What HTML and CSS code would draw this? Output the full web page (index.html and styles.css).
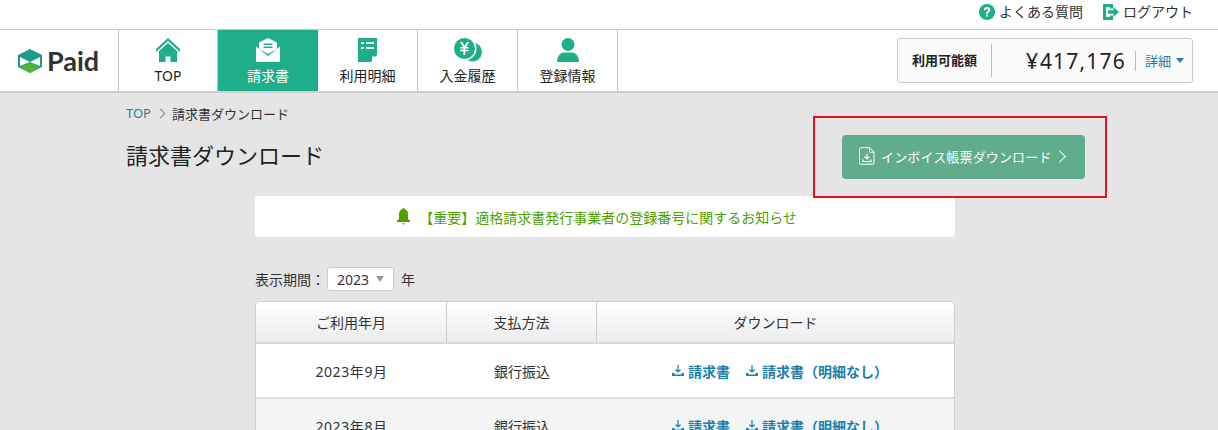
FILE: index.html
```html
<!DOCTYPE html>
<html lang="ja">
<head>
<meta charset="utf-8">
<title>請求書ダウンロード</title>
<link rel="stylesheet" href="styles.css">
</head>
<body>
<div class="topbar">
  <a class="toplink"><svg class="ic-help" viewBox="0 0 16 16"><circle cx="8" cy="8" r="8" fill="#1eae8a"/><path d="M4.800 6.200C4.900 4.200 6.300 3 8.100 3c1.900 0 3.200 1.100 3.200 2.700 0 2.300-2.400 2.300-2.400 4.100H7C7 7.400 9.200 7.400 9.200 5.900c0-.6-.4-1-1.100-1-.8 0-1.200.5-1.300 1.300z" fill="#fff"/><rect x="7" y="10.600" width="1.900" height="2" fill="#fff"/></svg>よくある質問</a>
  <a class="toplink"><svg class="ic-logout" viewBox="0 0 16 16"><path d="M0 0h10v4.500H7V3H3v10h4v-1.500h3V16H0z" fill="#1eae8a"/><path d="M5 6.200h5.500V3.200L16 8l-5.500 4.800v-3H5z" fill="#1eae8a"/></svg>ログアウト</a>
</div>
<header class="nav">
  <div class="logo">
    <svg class="logo-mark" viewBox="0 0 24 24"><path d="M12 0l12 6v12l-12 6L0 18V6z" fill="#1c9c86"/><path d="M2 8l10 5 10-5v9l-10-4-10 4z" fill="#fff"/><path d="M12 13.500l9.500 4.500L12 24 2.500 18z" fill="#55b332"/></svg>
    <span class="logo-text">Paid</span>
  </div>
  <a class="nav-item first">
    <svg class="nav-ic" viewBox="0 0 26 24"><path d="M13 0L25 11v3L13 3 1 14v-3z" fill="#1eae8a"/><path d="M13 5l9 8v11h-6.500v-5.500h-5V24H4V13z" fill="#1eae8a"/></svg>
    <span>TOP</span>
  </a>
  <a class="nav-item active">
    <svg class="nav-ic" viewBox="0 0 24 24"><path d="M12 0l9 4.500V11l-9 5-9-5V4.500z" fill="#fff"/><rect x="7.500" y="5.500" width="9" height="1.500" fill="#1eae8a"/><rect x="7.500" y="8.500" width="9" height="1.500" fill="#1eae8a"/><path d="M0 8.500L12 18 24 8.500V24H0z" fill="#fff"/></svg>
    <span>請求書</span>
  </a>
  <a class="nav-item">
    <svg class="nav-ic" viewBox="0 0 20 24"><path d="M0 0h19v17l-6 7H0z" fill="#1eae8a"/><path d="M14 18.500h4.500L14 23.500z" fill="#fff"/><rect x="3" y="4" width="3" height="2" fill="#fff"/><rect x="8" y="4" width="8" height="2" fill="#fff"/><rect x="3" y="9" width="3" height="2" fill="#fff"/><rect x="8" y="9" width="8" height="2" fill="#fff"/></svg>
    <span>利用明細</span>
  </a>
  <a class="nav-item">
    <svg class="nav-ic ic-wide" viewBox="0 0 28 24"><circle cx="18.500" cy="14" r="9.500" fill="#1eae8a"/><circle cx="10.500" cy="10.500" r="12" fill="#fff"/><circle cx="10.500" cy="10.500" r="10.500" fill="#1eae8a"/><path d="M6 4h2.300l2.300 4 2.300-4h2.300l-3 5h2.300v1.500h-3.300v1.200h3.300v1.500h-3.300V17H9.500v-3.800H6.200v-1.500h3.300v-1.200H6.200V9h2.800z" fill="#fff"/></svg>
    <span>入金履歴</span>
  </a>
  <a class="nav-item">
    <svg class="nav-ic" viewBox="0 0 22 24"><circle cx="11" cy="6.500" r="6.500" fill="#1eae8a"/><path d="M0 24c0-6 3.500-9.500 7-9.500h8c3.500 0 7 3.500 7 9.500z" fill="#1eae8a"/></svg>
    <span>登録情報</span>
  </a>
  <div class="balance">
    <div class="balance-label">利用可能額</div>
    <div class="balance-value">¥<span class="amount">417,176</span></div>
    <a class="balance-detail">詳細<i class="tri"></i></a>
  </div>
</header>

<main class="main">
  <nav class="crumbs"><a>TOP</a><i class="chev"></i><span>請求書ダウンロード</span></nav>
  <div class="title-row">
    <h1>請求書ダウンロード</h1>
    <a class="invoice-btn">
      <svg class="ic-file" viewBox="0 0 16 18"><path d="M1.500.7h9l4.500 4.500v11a1 1 0 0 1-1 1H1.500a1 1 0 0 1-1-1V1.700a1 1 0 0 1 1-1z" fill="none" stroke="#fff"/><path d="M10.500.7v4.500H15" fill="none" stroke="#fff"/><path d="M8 6.500v5.500M5.500 9.500L8 12l2.500-2.500M4 12.500v2h8v-2" fill="none" stroke="#fff" stroke-width="1.200"/></svg>
      <span class="btn-label">インボイス帳票ダウンロード</span>
      <i class="btn-chev"></i>
    </a>
    <div class="annotation"></div>
  </div>
  <div class="content">
    <a class="notice">
      <svg class="ic-bell" viewBox="0 0 15 17"><path d="M7.500 0c.7 0 1 .5 1 1 2.300.6 3.500 2.500 3.500 5v5l2 1.500V14H1v-1.500L3 11V6c0-2.500 1.200-4.400 3.500-5 0-.5.300-1 1-1z" fill="#4ea100"/><path d="M6 15.300h3L7.500 17z" fill="#4ea100"/></svg>
      <span>【重要】適格請求書発行事業者の登録番号に関するお知らせ</span>
    </a>
    <div class="filter">
      <span>表示期間：</span>
      <div class="select">2023<i class="sel-tri"></i></div>
      <span>年</span>
    </div>
    <div class="table">
      <div class="tr th">
        <div class="c1">ご利用年月</div><div class="c2">支払方法</div><div class="c3">ダウンロード</div>
      </div>
      <div class="tr">
        <div class="c1 date">2023年9月</div><div class="c2">銀行振込</div>
        <div class="c3 dl">
          <a><svg class="ic-dl" viewBox="0 0 12 11"><path d="M6 0v6.500M3.500 4.500L6 7l2.500-2.500" fill="none" stroke="#1a80ad" stroke-width="1.200"/><path d="M0 8h2.500v1.500h7V8H12v3H0z" fill="#1a80ad"/></svg>請求書</a>
          <a><svg class="ic-dl" viewBox="0 0 12 11"><path d="M6 0v6.500M3.500 4.500L6 7l2.500-2.500" fill="none" stroke="#1a80ad" stroke-width="1.200"/><path d="M0 8h2.500v1.500h7V8H12v3H0z" fill="#1a80ad"/></svg>請求書（明細なし）</a>
        </div>
      </div>
      <div class="tr alt">
        <div class="c1 date">2023年8月</div><div class="c2">銀行振込</div>
        <div class="c3 dl">
          <a><svg class="ic-dl" viewBox="0 0 12 11"><path d="M6 0v6.500M3.500 4.500L6 7l2.500-2.500" fill="none" stroke="#1a80ad" stroke-width="1.200"/><path d="M0 8h2.500v1.500h7V8H12v3H0z" fill="#1a80ad"/></svg>請求書</a>
          <a><svg class="ic-dl" viewBox="0 0 12 11"><path d="M6 0v6.500M3.500 4.500L6 7l2.500-2.500" fill="none" stroke="#1a80ad" stroke-width="1.200"/><path d="M0 8h2.500v1.500h7V8H12v3H0z" fill="#1a80ad"/></svg>請求書（明細なし）</a>
        </div>
      </div>
    </div>
  </div>
</main>
</body>
</html>
```
FILE: styles.css
```css
* { box-sizing: border-box; }
html, body { margin: 0; padding: 0; height: 430px; overflow: hidden; }
body {
  background: #e5e5e5;
  color: #222;
  font-family: "Noto Sans", "Noto Sans CJK JP", sans-serif;
  font-size: 14px;
}
a { color: inherit; text-decoration: none; }
svg { display: block; flex: none; }

.topbar {
  height: 30px;
  background: #fff;
  border-bottom: 1px solid #c8c8c8;
  display: flex;
  justify-content: flex-end;
  align-items: center;
  gap: 20px;
  padding: 0 25px 6px 0;
}
.toplink { display: flex; align-items: center; gap: 4px; font-size: 14px; color: #333; line-height: 20px; }
.ic-help { width: 16px; height: 16px; }
.ic-logout { width: 16px; height: 16px; }

.nav {
  height: 63px;
  background: #fff;
  border-bottom: 2px solid #cfcfcf;
  display: flex;
}
.logo {
  width: 119px;
  border-right: 1px solid #c8c8c8;
  display: flex;
  align-items: center;
  padding: 0 0 0 18px;
  gap: 5px;
}
.logo-mark { width: 24px; height: 24px; }
.logo-text { font-family: Lato, sans-serif; font-weight: 700; font-size: 27px; color: #333; line-height: 1; }
.nav-item {
  width: 100px;
  border-right: 1px solid #c8c8c8;
  display: flex;
  flex-direction: column;
  align-items: center;
  padding-top: 8px;
  color: #222;
  font-size: 14px;
}
.nav-item.first { width: 99px; }
.nav-item span { line-height: 20px; margin-top: 4px; }
.nav-item.active { background: #1eae8a; color: #fff; border-right: 0; }
.nav-ic { height: 24px; width: 26px; }
.ic-wide { width: 28px; }

.balance {
  margin: 8px 25px 0 auto;
  width: 296px;
  height: 45px;
  border: 1px solid #c8c8c8;
  border-radius: 3px;
  background: #fbfbfb;
  display: flex;
  align-items: center;
}
.balance-label {
  width: 94px;
  height: 33px;
  border-right: 1px solid #bbb;
  font-weight: 700;
  font-size: 13px;
  line-height: 33px;
  text-align: center;
}
.balance-value {
  width: 143px;
  padding-right: 9px;
  font-size: 21px;
  color: #222;
  line-height: 28px;
  display: flex;
  justify-content: flex-end;
  gap: 2px;
}
.amount { letter-spacing: 1.2px; }
.balance-detail {
  height: 20px;
  border-left: 1px solid #bbb;
  padding-left: 9px;
  color: #1a80ad;
  font-size: 13px;
  line-height: 20px;
  display: flex;
  align-items: center;
  gap: 5px;
}
.tri { width: 0; height: 0; border: 4px solid transparent; border-top: 5px solid #1a80ad; border-bottom: 0; }

.main { width: 966px; margin-left: 126px; }
.crumbs { display: flex; align-items: center; height: 20px; margin-top: 10px; font-size: 13px; color: #333; }
.crumbs a { color: #1a80ad; }
.chev { width: 7px; height: 7px; border-top: 1px solid #888; border-right: 1px solid #888; transform: rotate(45deg); margin: 0 8px 0 6px; }

.title-row {
  position: relative;
  height: 44px;
  margin-top: 12px;
  padding-right: 7px;
  display: flex;
  justify-content: space-between;
  align-items: flex-start;
}
h1 { margin: 4px 0 0; font-size: 22px; font-weight: 400; line-height: 32px; color: #222; }
.invoice-btn {
  width: 243px;
  height: 44px;
  background: #60ac8d;
  border-radius: 4px;
  color: #fff;
  font-size: 13px;
  display: flex;
  align-items: center;
  padding: 0 0 2px 17px;
  gap: 6px;
}
.btn-label { letter-spacing: .15px; }
.ic-file { width: 16px; height: 18px; }
.btn-chev { width: 9px; height: 9px; border-top: 1px solid #fff; border-right: 1px solid #fff; transform: rotate(45deg); margin-left: -3px; }
.annotation {
  position: absolute;
  left: 687px;
  top: -19px;
  width: 294px;
  height: 82px;
  border: 2px solid #e8101a;
  pointer-events: none;
}

.content { width: 700px; margin: 17px 0 0 129px; }
.notice {
  height: 41px;
  background: #fff;
  border-radius: 3px;
  display: flex;
  align-items: center;
  justify-content: center;
  gap: 8px;
  padding-right: 17px;
  color: #4ea100;
  font-size: 14px;
}
.ic-bell { width: 15px; height: 17px; }
.filter { display: flex; align-items: center; height: 24px; margin-top: 30px; font-size: 14px; color: #333; }
.select {
  width: 67px;
  height: 24px;
  margin: 0 7px 0 2px;
  background: #fff;
  border: 1px solid #ccc;
  border-radius: 3px;
  display: flex;
  align-items: center;
  padding-left: 9px;
  gap: 7px;
}
.sel-tri { width: 0; height: 0; border: 4px solid transparent; border-top: 6px solid #999; border-bottom: 0; }

.table {
  margin-top: 10px;
  border: 1px solid #d0d0d0;
  border-radius: 5px 5px 0 0;
  background: #fff;
  overflow: hidden;
}
.tr { display: flex; height: 55px; align-items: center; border-bottom: 2px solid #dedede; font-size: 14px; color: #333; }
.tr > div { text-align: center; height: 100%; display: flex; align-items: center; justify-content: center; }
.c1 { width: 191px; }
.c2 { width: 150px; }
.c3 { flex: 1; }
.date { letter-spacing: .6px; }
.th { height: 42px; background: linear-gradient(#fff, #ececec); border-bottom: 2px solid #dadada; }
.th .c1, .th .c2 { border-right: 1px solid #ccc; }
.alt { background: #f3f5f5; }
.dl { gap: 16px; padding-left: 9px; }
.dl a { display: flex; align-items: center; gap: 4px; font-weight: 700; color: #1a80ad; font-size: 14px; }
.ic-dl { width: 12px; height: 11px; }
```
